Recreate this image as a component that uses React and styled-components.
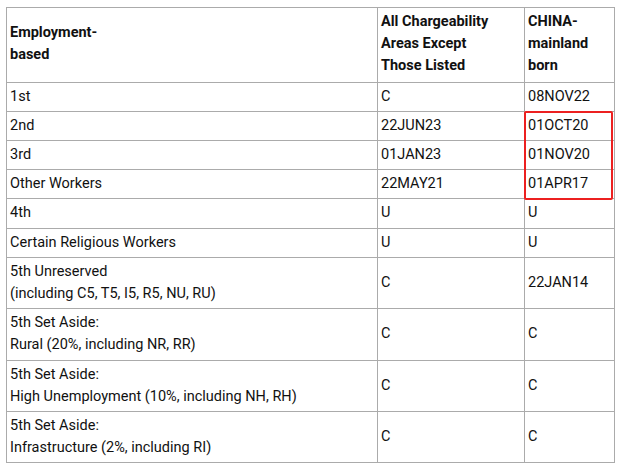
import React from 'react';
import styled, { createGlobalStyle } from 'styled-components';

const rows = [
  { category: ['1st'], all: 'C', china: '08NOV22' },
  { category: ['2nd'], all: '22JUN23', china: '01OCT20' },
  { category: ['3rd'], all: '01JAN23', china: '01NOV20' },
  { category: ['Other Workers'], all: '22MAY21', china: '01APR17' },
  { category: ['4th'], all: 'U', china: 'U' },
  { category: ['Certain Religious Workers'], all: 'U', china: 'U' },
  {
    category: ['5th Unreserved', '(including C5, T5, I5, R5, NU, RU)'],
    all: 'C',
    china: '22JAN14',
  },
  {
    category: ['5th Set Aside:', 'Rural (20%, including NR, RR)'],
    all: 'C',
    china: 'C',
  },
  {
    category: ['5th Set Aside:', 'High Unemployment (10%, including NH, RH)'],
    all: 'C',
    china: 'C',
  },
  {
    category: ['5th Set Aside:', 'Infrastructure (2%, including RI)'],
    all: 'C',
    china: 'C',
  },
];

export default function App() {
  return (
    <>
      <GlobalStyle />
      <Wrapper>
        <Table>
          <colgroup>
            <col style={{ width: 371 }} />
            <col style={{ width: 147 }} />
            <col style={{ width: 90 }} />
          </colgroup>
          <thead>
            <tr>
              <HeadCell>
                Employment-
                <br />
                based
              </HeadCell>
              <HeadCell>
                All Chargeability
                <br />
                Areas Except
                <br />
                Those Listed
              </HeadCell>
              <HeadCell>
                CHINA-
                <br />
                mainland
                <br />
                born
              </HeadCell>
            </tr>
          </thead>
          <tbody>
            {rows.map((row, i) => (
              <tr key={i}>
                <Cell>
                  {row.category.map((line, j) => (
                    <Line key={j}>{line}</Line>
                  ))}
                </Cell>
                <Cell>{row.all}</Cell>
                <Cell>{row.china}</Cell>
              </tr>
            ))}
          </tbody>
        </Table>
        <Highlight />
      </Wrapper>
    </>
  );
}

const GlobalStyle = createGlobalStyle`
  html, body {
    margin: 0;
    padding: 0;
    background: #ffffff;
  }
  body {
    font-family: Roboto, "Liberation Sans", sans-serif;
    color: #111111;
  }
`;

const Wrapper = styled.div`
  position: relative;
  width: 608px;
  margin: 7px 0 0 6px;
`;

const Table = styled.table`
  width: 608px;
  table-layout: fixed;
  border-collapse: collapse;
  font-size: 14.5px;
  line-height: 22.2px;
`;

const HeadCell = styled.th`
  border: 1px solid #ababab;
  padding: 3px 3px 4px 3px;
  text-align: left;
  vertical-align: middle;
  font-weight: 700;
`;

const Cell = styled.td`
  border: 1px solid #ababab;
  padding: 3px 3px;
  text-align: left;
  vertical-align: middle;
  font-weight: 400;
  white-space: nowrap;
`;

const Line = styled.div`
  display: block;
`;

const Highlight = styled.div`
  position: absolute;
  left: 518px;
  top: 104px;
  width: 89px;
  height: 89px;
  box-sizing: border-box;
  border: 2px solid #ec2020;
  border-radius: 2px;
  pointer-events: none;
`;
